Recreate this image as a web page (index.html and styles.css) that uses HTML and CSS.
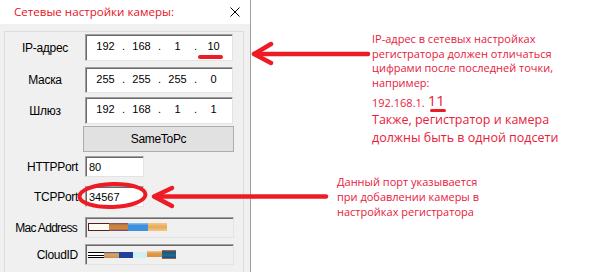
FILE: index.html
```html
<!DOCTYPE html>
<html lang="ru">
<head>
    <meta charset="UTF-8">
    <meta name="viewport" content="width=device-width, initial-scale=1.0">
    <title>Сетевые настройки камеры</title>
    <link rel="stylesheet" href="styles.css">
</head>
<body>
    <div class="page">
        <div class="dialog">
            <div class="titlebar">
                <span class="title">Сетевые настройки камеры:</span>
                <svg class="close" width="10" height="10" viewBox="0 0 10 10">
                    <path d="M0.5 0.5 L9.5 9.5 M9.5 0.5 L0.5 9.5" stroke="#000" stroke-width="1"/>
                </svg>
            </div>
            <div class="dialog-body">
                <div class="group">
                    <div class="row row-ip">
                        <span class="label center">IP-адрес</span>
                        <div class="field ip">
                            <span class="seg">192</span><span class="dot">.</span>
                            <span class="seg">168</span><span class="dot">.</span>
                            <span class="seg">1</span><span class="dot">.</span>
                            <span class="seg marked">10</span>
                        </div>
                    </div>
                    <div class="row row-mask">
                        <span class="label center">Маска</span>
                        <div class="field ip short">
                            <span class="seg">255</span><span class="dot">.</span>
                            <span class="seg">255</span><span class="dot">.</span>
                            <span class="seg">255</span><span class="dot">.</span>
                            <span class="seg">0</span>
                        </div>
                    </div>
                    <div class="row row-gw">
                        <span class="label center">Шлюз</span>
                        <div class="field ip">
                            <span class="seg">192</span><span class="dot">.</span>
                            <span class="seg">168</span><span class="dot">.</span>
                            <span class="seg">1</span><span class="dot">.</span>
                            <span class="seg">1</span>
                        </div>
                    </div>
                    <button class="same-btn">SameToPc</button>
                    <div class="row row-http">
                        <span class="label">HTTPPort</span>
                        <div class="field port">80</div>
                    </div>
                    <div class="row row-tcp">
                        <span class="label">TCPPort</span>
                        <div class="field port">34567</div>
                    </div>
                    <div class="row row-mac">
                        <span class="label tight">Mac Address</span>
                        <div class="field wide disabled">
                            <div class="redact mac">
                                <i class="r-box"></i><i class="r-brown"></i><i class="r-blue"></i><i class="r-tan"></i>
                            </div>
                        </div>
                    </div>
                    <div class="row row-cloud">
                        <span class="label">CloudID</span>
                        <div class="field wide disabled">
                            <div class="redact cloud">
                                <i class="r-lines"></i><i class="r-tan2"></i><i class="r-navy"></i><i class="r-cyan"></i><i class="r-orange"></i><i class="r-teal"></i>
                            </div>
                        </div>
                    </div>
                </div>
            </div>
        </div>

        <div class="notes">
            <p class="note note-ip">
                IP-адрес в сетевых настройках<br>
                регистратора должен отличаться<br>
                цифрами после последней точки,<br>
                например:<br>
                <span class="example">192.168.1.<span class="big">11</span></span>
                <span class="note-big">Также, регистратор и камера<br>должны быть в одной подсети</span>
            </p>
            <p class="note note-port">
                Данный порт указывается<br>
                при добавлении камеры в<br>
                настройках регистратора
            </p>
        </div>

        <!-- red marks drawn over the screenshot -->
        <svg class="marks" width="610" height="272" viewBox="0 0 610 272">
            <g fill="none" stroke="#ed1c24" stroke-linecap="round" stroke-linejoin="round">
                <path d="M256 54 L368 54" stroke-width="4.5"/>
                <path d="M271 44 L254 54 L271 63" stroke-width="4.5"/>
                <ellipse cx="112.5" cy="195.5" rx="33" ry="11.5" stroke-width="4" transform="rotate(-2 112.5 195.5)"/>
                <path d="M155 196.5 L326 196.5" stroke-width="4.5"/>
                <path d="M172 188 L154 196.5 L172 206" stroke-width="4.5"/>
            </g>
        </svg>
    </div>
</body>
</html>
```

FILE: styles.css
```css
/* Page */
html, body {
    margin: 0;
    padding: 0;
    background: #fff;
}

.page {
    position: relative;
    width: 610px;
    height: 272px;
    display: flex;
    overflow: hidden;
}

/* Dialog window */
.dialog {
    width: 250px;
    height: 272px;
    border-right: 1px solid #a0a0a0;
    display: flex;
    flex-direction: column;
    font-family: 'Liberation Sans', Arial, sans-serif;
}

.titlebar {
    height: 24px;
    flex-shrink: 0;
    background: #fff;
    display: flex;
    align-items: center;
    justify-content: space-between;
    padding: 0 10px 0 14px;
}

.title {
    font-family: 'Open Sans', 'Noto Sans', sans-serif;
    font-size: 11.6px;
    color: #e81123;
    margin-top: -1px;
}

.close {
    display: block;
    margin-top: -1px;
}

.dialog-body {
    flex: 1;
    background: #f0f0f0;
    padding: 7px 6px 0 4px;
}

.group {
    height: 100%;
    border: 1px solid #dcdcdc;
    border-bottom: none;
    padding-top: 2px;
}

/* Rows */
.row {
    display: flex;
    align-items: center;
}

.label {
    width: 80px;
    flex-shrink: 0;
    box-sizing: border-box;
    padding-right: 7px;
    text-align: right;
    font-size: 12px;
    letter-spacing: -0.3px;
    color: #000;
}

.label.center {
    padding-right: 0;
    text-align: center;
}

.label.tight {
    padding-right: 8px;
    letter-spacing: -0.7px;
}

.field {
    box-sizing: border-box;
    background: #fff;
    border-top: 1px solid #a0a0a0;
    border-left: 1px solid #a0a0a0;
    border-right: 1px solid #e3e3e3;
    border-bottom: 1px solid #e3e3e3;
    box-shadow: inset 1px 1px 0 #696969;
    font-size: 11px;
    color: #000;
}

.field.ip {
    width: 148px;
    height: 27px;
    display: flex;
    align-items: flex-start;
    padding: 5px 0 0 6px;
}

.field.ip.short {
    height: 26px;
}

.seg {
    width: 27px;
    text-align: center;
}

.dot {
    width: 9px;
    text-align: center;
}

.marked {
    position: relative;
}

.marked::after {
    content: '';
    position: absolute;
    left: -2px;
    top: 15px;
    width: 25px;
    height: 4px;
    border-radius: 2px;
    background: #ed1c24;
}

.field.port {
    width: 59px;
    height: 21px;
    padding: 4px 0 0 3px;
}

.field.wide {
    width: 149px;
    height: 21px;
    padding: 4px 0 0 2px;
}

.field.disabled {
    background: #f0f0f0;
}

.row-ip { margin-top: 0; }
.row-mask { margin-top: 6px; }
.row-gw { margin-top: 4px; }
.row-http { margin-top: 4px; }
.row-tcp { margin-top: 9px; }
.row-mac { margin-top: 10px; }
.row-cloud { margin-top: 6px; }

.same-btn {
    display: block;
    margin: 2px 0 0 78px;
    width: 151px;
    height: 26px;
    background: #e1e1e1;
    border: 1px solid #adadad;
    font-family: 'Liberation Sans', Arial, sans-serif;
    font-size: 12px;
    letter-spacing: -0.3px;
    color: #000;
    padding: 0;
}

/* Hidden (smeared) values */
.redact {
    display: flex;
    align-items: center;
}

.redact i {
    display: block;
    flex-shrink: 0;
}

.redact.mac {
    height: 8px;
    margin-top: 1px;
}

.r-box {
    width: 20px;
    height: 6px;
    background: #fffbee;
    border: 1px solid #5a1a28;
    border-right: none;
}

.r-brown {
    width: 19px;
    height: 8px;
    background: linear-gradient(#7a4a70 0, #c8803a 25%, #d08a40 75%, #5a3a80 100%);
}

.r-blue {
    width: 20px;
    height: 8px;
    background: linear-gradient(#8ec4f0 0, #3f90dc 30%, #3f90dc 100%);
}

.r-tan {
    width: 19px;
    height: 8px;
    background: linear-gradient(#f4c880 0, #e8a858 50%, #f0c890 100%);
}

.redact.cloud {
    height: 10px;
    margin-top: 1px;
}

.r-lines {
    width: 16px;
    height: 6px;
    background: linear-gradient(#000 0, #000 1px, #fff 1px, #fff 3px, #000 3px, #000 4px, #fff 4px, #fff 5px, #000 5px);
}

.r-tan2 {
    width: 15px;
    height: 6px;
    background: linear-gradient(#40387a 0, #d8a868 30%, #c89050 100%);
}

.r-navy {
    width: 14px;
    height: 6px;
    background: #1f3f9a;
}

.r-cyan {
    width: 14px;
    height: 6px;
    background: #d2f0f2;
}

.r-orange {
    width: 15px;
    height: 6px;
    margin-top: -3px;
    background: linear-gradient(#f0c890 0, #e09a48 40%, #d89040 100%);
}

.r-teal {
    width: 14px;
    height: 9px;
    margin-top: -2px;
    background: linear-gradient(#e07020 0, #1d4f8f 20%, #1f7080 60%, #1d4f8f 85%, #e07020 100%);
}

/* Notes on the right */
.notes {
    flex: 1;
    padding: 32px 0 0 121px;
    font-family: 'Open Sans', 'Noto Sans', sans-serif;
    color: #e8203a;
}

.note {
    margin: 0;
    font-size: 11px;
    line-height: 14.7px;
}

.example {
    display: block;
    line-height: 18px;
}

.big {
    position: relative;
    font-size: 15px;
    margin-left: 3px;
    vertical-align: 1px;
}

.big::after {
    content: '';
    position: absolute;
    left: 2px;
    bottom: -2px;
    width: 16px;
    height: 3px;
    border-radius: 2px;
    background: #ed1c24;
}

.note-big {
    display: block;
    font-size: 12.5px;
    line-height: 18px;
    margin-top: -1px;
}

.note-port {
    margin: 27px 0 0 -35px;
    line-height: 15px;
}

.marks {
    position: absolute;
    left: 0;
    top: 0;
    pointer-events: none;
}
```
